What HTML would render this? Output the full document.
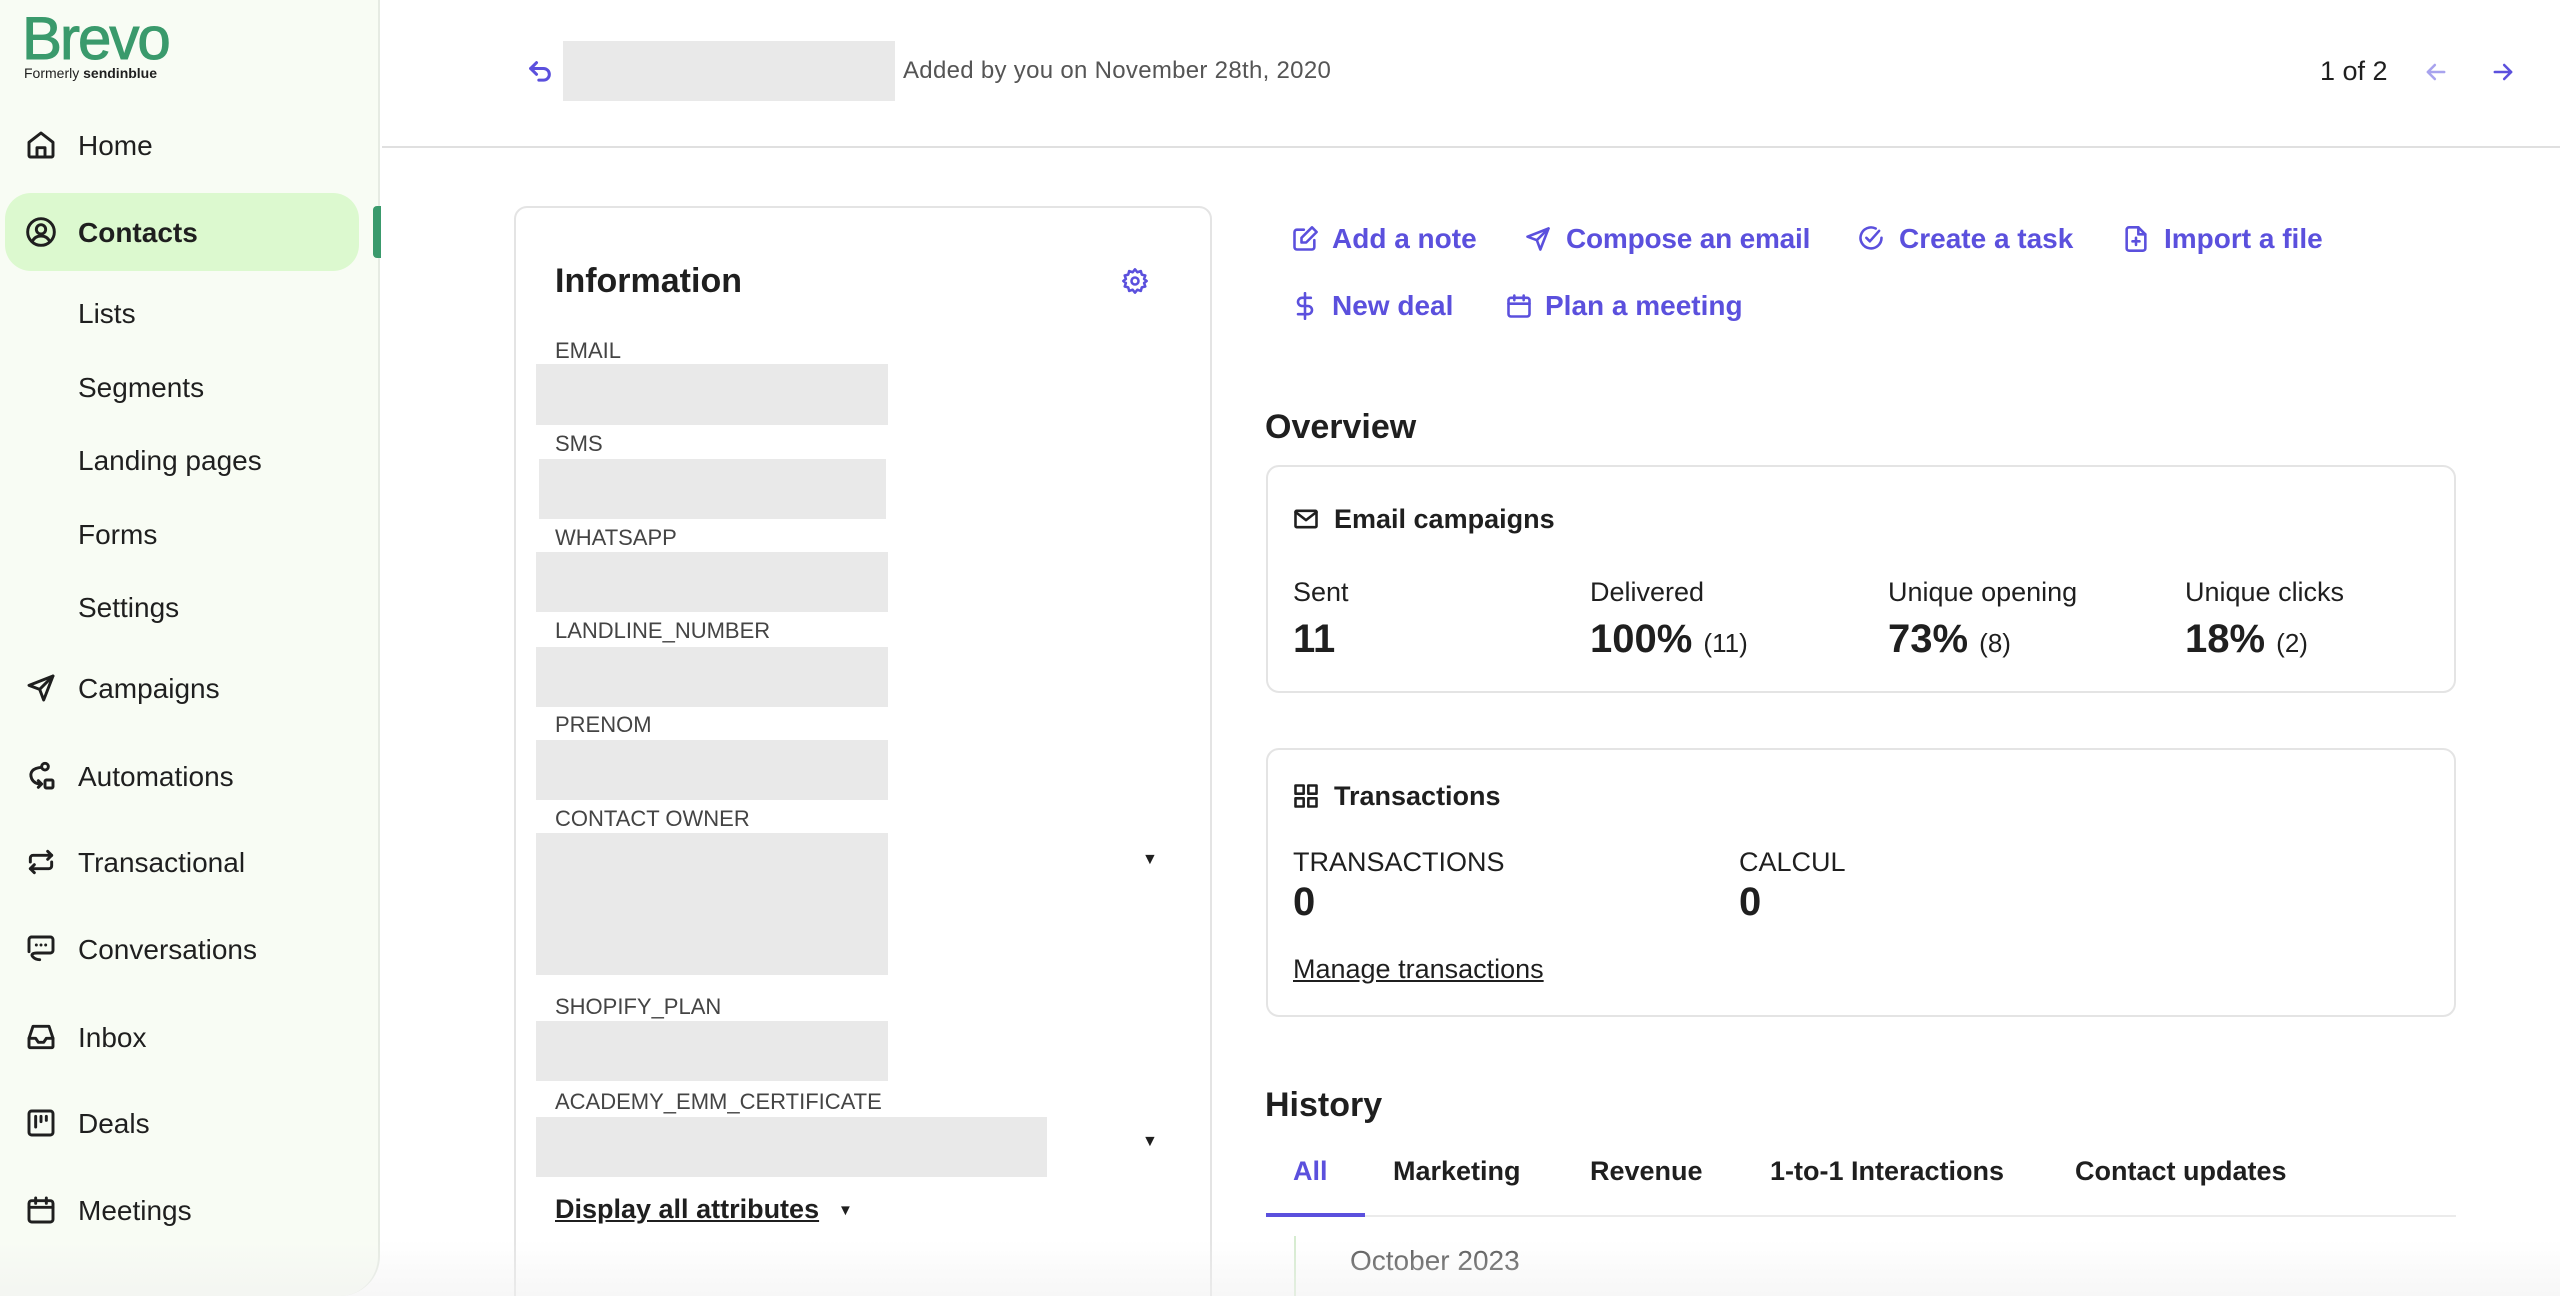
<!DOCTYPE html>
<html style="overflow:hidden;width:2560px;height:1296px"><head><meta charset="utf-8">
<style>
*{box-sizing:border-box;margin:0;padding:0}
body{width:2560px;height:1296px;overflow:hidden;background:#fff;font-family:"Liberation Sans",sans-serif;color:#1f1f1f;position:relative}
.a{position:absolute;white-space:nowrap}
#side{position:absolute;left:0;top:0;width:380px;height:1296px;background:#f8fcf4;border-right:2px solid #e6ebe3;border-bottom-right-radius:40px}
.nav{position:absolute;left:78px;font-size:28px;line-height:34px;color:#1f1f1f}
.ic{position:absolute;left:25px;width:32px;height:32px}
.ic svg,.pi svg{width:100%;height:100%;fill:none;stroke:currentColor;stroke-width:2.2;stroke-linecap:round;stroke-linejoin:round}
.lbl{position:absolute;left:555px;font-size:22px;color:#444;line-height:26px}
.box{position:absolute;background:#e9e9e9}
.act{position:absolute;font-size:28px;font-weight:bold;color:#5b50dd;line-height:34px}
.pi{position:absolute;width:28px;height:28px;color:#5b50dd}
.card{position:absolute;border:2px solid #e4e4e4;border-radius:13px;background:#fff}
.sl{position:absolute;font-size:27px;color:#1f1f1f;line-height:32px}
.sv{position:absolute;font-size:40px;font-weight:bold;line-height:46px}
.sv span{font-size:26px;font-weight:normal}
.tab{position:absolute;top:1154px;font-size:27px;font-weight:bold;line-height:34px}
</style></head><body>

<div id="side">
  <div class="a" style="left:22px;top:6px;font-size:60px;color:#3a9a6c;letter-spacing:-2px;line-height:66px;-webkit-text-stroke:1px #3a9a6c">Brevo</div>
  <div class="a" style="left:24px;top:64px;font-size:14px;color:#1f1f1f;line-height:18px">Formerly <b>sendinblue</b></div>

  <div class="ic" style="top:129px"><svg viewBox="0 0 24 24"><path d="M3 10l9-7 9 7v10a1 1 0 0 1-1 1H4a1 1 0 0 1-1-1z"/><path d="M9 21v-7h6v7"/></svg></div>
  <div class="nav" style="top:129px">Home</div>

  <div style="position:absolute;left:5px;top:193px;width:354px;height:78px;background:#dcf9cf;border-radius:26px"></div>
  <div class="ic" style="top:216px"><svg viewBox="0 0 24 24"><circle cx="12" cy="12" r="10"/><circle cx="12" cy="10" r="3.5"/><path d="M5.5 19c1.5-3 4-4 6.5-4s5 1 6.5 4"/></svg></div>
  <div class="nav" style="top:216px;font-weight:bold">Contacts</div>
  <div style="position:absolute;left:373px;top:206px;width:8px;height:52px;background:#3a9a6c;border-radius:4px 0 0 4px"></div>

  <div class="nav" style="top:297px">Lists</div>
  <div class="nav" style="top:371px">Segments</div>
  <div class="nav" style="top:444px">Landing pages</div>
  <div class="nav" style="top:518px">Forms</div>
  <div class="nav" style="top:591px">Settings</div>

  <div class="ic" style="top:672px"><svg viewBox="0 0 24 24"><path d="M21 3L3 10l8 3 3 8z"/><path d="M11 13l10-10"/></svg></div>
  <div class="nav" style="top:672px">Campaigns</div>
  <div class="ic" style="top:760px"><svg viewBox="0 0 24 24"><circle cx="15" cy="5" r="2.5"/><rect x="15" y="15" width="6" height="6" rx="1"/><path d="M12.5 5.5C6 6 3 9 5 14c1 2 3 4 7 4"/><path d="M10 15.5l2.5 2.5-2.5 2.5"/></svg></div>
  <div class="nav" style="top:760px">Automations</div>
  <div class="ic" style="top:846px"><svg viewBox="0 0 24 24"><path d="M4 12V9a2 2 0 0 1 2-2h14"/><path d="M17 4l3 3-3 3"/><path d="M20 12v3a2 2 0 0 1-2 2H4"/><path d="M7 20l-3-3 3-3"/></svg></div>
  <div class="nav" style="top:846px">Transactional</div>
  <div class="ic" style="top:933px"><svg viewBox="0 0 24 24"><path d="M5 3h14a2 2 0 0 1 2 2v8a2 2 0 0 1-2 2H9c-3 0-5 1-3 3 1 1 3 2 5 2"/><path d="M5 3a2 2 0 0 0-2 2v9"/><path d="M8.5 9h.01M12 9h.01M15.5 9h.01"/></svg></div>
  <div class="nav" style="top:933px">Conversations</div>
  <div class="ic" style="top:1021px"><svg viewBox="0 0 24 24"><path d="M3 13l3-9h12l3 9v6a1 1 0 0 1-1 1H4a1 1 0 0 1-1-1z"/><path d="M3 13h5l2 3h4l2-3h5"/></svg></div>
  <div class="nav" style="top:1021px">Inbox</div>
  <div class="ic" style="top:1107px"><svg viewBox="0 0 24 24"><rect x="3" y="3" width="18" height="18" rx="2"/><path d="M8 7v8M12 7v4M16 7v3"/></svg></div>
  <div class="nav" style="top:1107px">Deals</div>
  <div class="ic" style="top:1194px"><svg viewBox="0 0 24 24"><rect x="3" y="5" width="18" height="16" rx="2"/><path d="M3 10h18M8 3v4M16 3v4"/></svg></div>
  <div class="nav" style="top:1194px">Meetings</div>
</div>

<!-- header -->
<div style="position:absolute;left:382px;top:146px;width:2178px;height:2px;background:#e0e0e0"></div>
<div class="pi" style="left:526px;top:58px"><svg viewBox="0 0 24 24" style="stroke-width:2.6"><path d="M9 14L4 9l5-5"/><path d="M4 9h11a5 5 0 0 1 0 10h-4"/></svg></div>
<div class="box" style="left:563px;top:41px;width:332px;height:60px"></div>
<div class="a" style="left:903px;top:57px;font-size:24px;color:#555;letter-spacing:.3px">Added by you on November 28th, 2020</div>
<div class="a" style="left:2320px;top:56px;font-size:27px">1 of 2</div>
<div class="pi" style="left:2422px;top:58px;color:#a8a3ee"><svg viewBox="0 0 24 24"><path d="M19 12H5M11 6l-6 6 6 6"/></svg></div>
<div class="pi" style="left:2489px;top:58px"><svg viewBox="0 0 24 24"><path d="M5 12h14M13 6l6 6-6 6"/></svg></div>

<!-- info card -->
<div class="card" style="left:514px;top:206px;width:698px;height:1110px"></div>
<div class="a" style="left:555px;top:261px;font-size:34px;font-weight:bold;line-height:40px">Information</div>
<div class="pi" style="left:1121px;top:267px"><svg viewBox="0 0 24 24"><circle cx="12" cy="12" r="3"/><path d="M12 2l2 2.5 3-1 .8 3 3 .8-1 3L22 12l-2.2 1.7 1 3-3 .8-.8 3-3-1L12 22l-2-2.5-3 1-.8-3-3-.8 1-3L2 12l2.2-1.7-1-3 3-.8.8-3 3 1z"/></svg></div>

<div class="lbl" style="top:338px">EMAIL</div><div class="box" style="left:536px;top:364px;width:352px;height:61px"></div>
<div class="lbl" style="top:431px">SMS</div><div class="box" style="left:539px;top:459px;width:347px;height:60px"></div>
<div class="lbl" style="top:525px">WHATSAPP</div><div class="box" style="left:536px;top:552px;width:352px;height:60px"></div>
<div class="lbl" style="top:618px">LANDLINE_NUMBER</div><div class="box" style="left:536px;top:647px;width:352px;height:60px"></div>
<div class="lbl" style="top:712px">PRENOM</div><div class="box" style="left:536px;top:740px;width:352px;height:60px"></div>
<div class="lbl" style="top:806px">CONTACT OWNER</div><div class="box" style="left:536px;top:833px;width:352px;height:142px"></div>
<div class="a" style="left:1142px;top:851px;font-size:16px">▼</div>
<div class="lbl" style="top:994px">SHOPIFY_PLAN</div><div class="box" style="left:536px;top:1021px;width:352px;height:60px"></div>
<div class="lbl" style="top:1089px">ACADEMY_EMM_CERTIFICATE</div><div class="box" style="left:536px;top:1117px;width:511px;height:60px"></div>
<div class="a" style="left:1142px;top:1133px;font-size:16px">▼</div>
<div class="a" style="left:555px;top:1192px;font-size:27px;font-weight:bold;text-decoration:underline;line-height:34px">Display all attributes</div>
<div class="a" style="left:838px;top:1202px;font-size:15px">▼</div>

<!-- actions -->
<div class="pi" style="left:1291px;top:225px"><svg viewBox="0 0 24 24"><path d="M11 4H5a2 2 0 0 0-2 2v13a2 2 0 0 0 2 2h13a2 2 0 0 0 2-2v-6"/><path d="M18 2l4 4-9 9H9v-4z"/></svg></div>
<div class="act" style="left:1332px;top:222px">Add a note</div>
<div class="pi" style="left:1524px;top:225px"><svg viewBox="0 0 24 24"><path d="M21 3L3 10l8 3 3 8z"/><path d="M11 13l10-10"/></svg></div>
<div class="act" style="left:1566px;top:222px;letter-spacing:-.2px">Compose an email</div>
<div class="pi" style="left:1857px;top:225px"><svg viewBox="0 0 24 24"><path d="M21 11a9 9 0 1 1-5-8"/><path d="M8 11l3 3 8-9"/></svg></div>
<div class="act" style="left:1899px;top:222px">Create a task</div>
<div class="pi" style="left:2122px;top:225px"><svg viewBox="0 0 24 24"><path d="M14 2H6a2 2 0 0 0-2 2v16a2 2 0 0 0 2 2h12a2 2 0 0 0 2-2V8z"/><path d="M14 2v6h6M12 11v6M9 14h6"/></svg></div>
<div class="act" style="left:2164px;top:222px">Import a file</div>
<div class="pi" style="left:1291px;top:292px"><svg viewBox="0 0 24 24"><path d="M12 1v22"/><path d="M17 5H9.5a3.5 3.5 0 0 0 0 7h5a3.5 3.5 0 0 1 0 7H6"/></svg></div>
<div class="act" style="left:1332px;top:289px">New deal</div>
<div class="pi" style="left:1505px;top:292px"><svg viewBox="0 0 24 24"><rect x="3" y="5" width="18" height="16" rx="2"/><path d="M3 10h18M8 3v4M16 3v4"/></svg></div>
<div class="act" style="left:1545px;top:289px">Plan a meeting</div>

<div class="a" style="left:1265px;top:407px;font-size:34px;font-weight:bold;line-height:40px">Overview</div>

<div class="card" style="left:1266px;top:465px;width:1190px;height:228px"></div>
<div class="pi" style="left:1292px;top:505px;color:#1f1f1f"><svg viewBox="0 0 24 24"><rect x="3" y="5" width="18" height="14" rx="1"/><path d="M3 6l9 7 9-7"/></svg></div>
<div class="a" style="left:1334px;top:503px;font-size:27px;font-weight:bold;line-height:32px">Email campaigns</div>
<div class="sl" style="left:1293px;top:576px">Sent</div>
<div class="sl" style="left:1590px;top:576px">Delivered</div>
<div class="sl" style="left:1888px;top:576px">Unique opening</div>
<div class="sl" style="left:2185px;top:576px">Unique clicks</div>
<div class="sv" style="left:1293px;top:616px">11</div>
<div class="sv" style="left:1590px;top:616px">100% <span>(11)</span></div>
<div class="sv" style="left:1888px;top:616px">73% <span>(8)</span></div>
<div class="sv" style="left:2185px;top:616px">18% <span>(2)</span></div>

<div class="card" style="left:1266px;top:748px;width:1190px;height:269px"></div>
<div class="pi" style="left:1292px;top:782px;color:#1f1f1f"><svg viewBox="0 0 24 24"><rect x="3" y="3" width="7" height="7"/><rect x="14" y="3" width="7" height="7"/><rect x="3" y="14" width="7" height="7"/><rect x="14" y="14" width="7" height="7"/></svg></div>
<div class="a" style="left:1334px;top:780px;font-size:27px;font-weight:bold;line-height:32px">Transactions</div>
<div class="sl" style="left:1293px;top:846px">TRANSACTIONS</div>
<div class="sl" style="left:1739px;top:846px">CALCUL</div>
<div class="sv" style="left:1293px;top:879px">0</div>
<div class="sv" style="left:1739px;top:879px">0</div>
<div class="sl" style="left:1293px;top:953px;text-decoration:underline">Manage transactions</div>

<div class="a" style="left:1265px;top:1085px;font-size:34px;font-weight:bold;line-height:40px">History</div>
<div class="tab" style="left:1293px;color:#5b50dd">All</div>
<div class="tab" style="left:1393px">Marketing</div>
<div class="tab" style="left:1590px">Revenue</div>
<div class="tab" style="left:1770px">1-to-1 Interactions</div>
<div class="tab" style="left:2075px">Contact updates</div>
<div style="position:absolute;left:1266px;top:1215px;width:1190px;height:2px;background:#ebebeb"></div>
<div style="position:absolute;left:1266px;top:1213px;width:99px;height:4px;background:#5b50dd"></div>
<div style="position:absolute;left:1294px;top:1236px;width:2px;height:60px;background:#d6ecd0"></div>
<div class="a" style="left:1350px;top:1245px;font-size:28px;color:#555">October 2023</div>

<div style="position:absolute;left:0;top:1240px;width:2560px;height:56px;background:linear-gradient(rgba(255,255,255,0),rgba(240,240,240,.55))"></div>
</body></html>
